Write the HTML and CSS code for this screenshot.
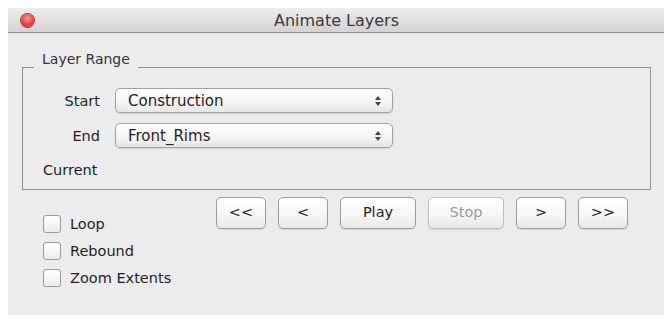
FILE: index.html
```html
<!DOCTYPE html>
<html lang="en">
<head>
    <meta charset="UTF-8">
    <title>Animate Layers</title>
    <link rel="stylesheet" href="styles.css">
</head>
<body>
    <div class="window">
        <div class="titlebar">
            <span class="close"></span>
            <span class="title">Animate Layers</span>
        </div>
        <div class="content">
            <fieldset class="group">
                <legend>Layer Range</legend>
                <div class="range">
                    <label>Start</label>
                    <div class="popup">
                        <span>Construction</span>
                        <svg class="arrows" width="8" height="12" viewBox="0 0 8 12"><path d="M4 1 L7 5 L1 5 Z M4 11 L7 7 L1 7 Z" fill="#444"/></svg>
                    </div>
                    <label>End</label>
                    <div class="popup">
                        <span>Front_Rims</span>
                        <svg class="arrows" width="8" height="12" viewBox="0 0 8 12"><path d="M4 1 L7 5 L1 5 Z M4 11 L7 7 L1 7 Z" fill="#444"/></svg>
                    </div>
                    <label class="left">Current</label>
                    <div></div>
                </div>
            </fieldset>
            <div class="controls">
                <div class="checks">
                    <div class="check"><span class="box"></span>Loop</div>
                    <div class="check"><span class="box"></span>Rebound</div>
                    <div class="check"><span class="box"></span>Zoom Extents</div>
                </div>
                <div class="buttons">
                    <button class="small">&lt;&lt;</button>
                    <button class="small">&lt;</button>
                    <button class="wide">Play</button>
                    <button class="wide" disabled>Stop</button>
                    <button class="small">&gt;</button>
                    <button class="small">&gt;&gt;</button>
                </div>
            </div>
        </div>
    </div>
</body>
</html>
```

FILE: styles.css
```css
body {
    margin: 8px;
    background-color: white;
    font-family: "DejaVu Sans", sans-serif;
    font-size: 15px;
    color: #1e1e1e;
}
.window {
    width: 657px;
    height: 307px;
    background-color: #ececec;
}
.titlebar {
    height: 24px;
    border-bottom: 1px solid #8c8c8c;
    background: linear-gradient(#eeeeee, #d2d2d2);
    display: flex;
    align-items: center;
    position: relative;
}
.close {
    width: 13px;
    height: 13px;
    margin-left: 13px;
    border-radius: 50%;
    background: radial-gradient(circle at 50% 35%, #ff9a9a, #e0403f 60%, #b52a2a);
    box-shadow: 0 0 0 1px #a33;
}
.title {
    position: absolute;
    left: 0;
    right: 0;
    text-align: center;
    font-size: 16px;
    color: #383838;
}
.content {
    padding-top: 18px;
}
.group {
    margin: 0 0 0 14px;
    padding: 0 0 10px 0;
    width: 627px;
    border: 1px solid #8f8f8f;
    box-sizing: content-box;
}
.group legend {
    margin-left: 11px;
    padding: 0 8px 16px 8px;
    line-height: 16px;
    font-size: 14px;
    color: #333;
}
.range {
    display: grid;
    grid-template-columns: 57px 278px;
    column-gap: 15px;
    row-gap: 10px;
    padding-left: 20px;
    padding-top: 5px;
    align-items: center;
}
.range label {
    text-align: right;
    font-size: 14.5px;
}
.range label.left {
    text-align: left;
    margin-top: 3px;
    line-height: 18px;
}
.popup {
    height: 23px;
    border: 1px solid #a2a2a2;
    border-radius: 5px;
    background: linear-gradient(#ffffff, #f4f4f4 60%, #e6e6e6);
    display: flex;
    align-items: center;
    justify-content: space-between;
    padding: 0 10px 0 12px;
    box-shadow: 0 1px 1px rgba(0,0,0,0.12);
}
.controls {
    display: flex;
    margin-top: 7px;
}
.checks {
    width: 173px;
    margin-left: 35px;
    margin-top: 18px;
    display: flex;
    flex-direction: column;
    gap: 9px;
}
.check {
    display: flex;
    align-items: center;
    gap: 9px;
    height: 18px;
    font-size: 14.5px;
}
.box {
    width: 16px;
    height: 16px;
    border: 1px solid #9a9a9a;
    border-radius: 3px;
    background: linear-gradient(#ffffff, #ececec);
}
.buttons {
    display: flex;
    gap: 12px;
}
button {
    height: 32px;
    border: 1px solid #9c9c9c;
    border-radius: 5px;
    background: linear-gradient(#ffffff, #f6f6f6 60%, #e8e8e8);
    font-family: "DejaVu Sans", sans-serif;
    font-size: 14.5px;
    color: #1e1e1e;
    padding: 0 0 3px 0;
    box-shadow: 0 1px 1px rgba(0,0,0,0.1);
}
button.small {
    width: 50px;
}
button.wide {
    width: 76px;
}
button:disabled {
    color: #9a9a9a;
    border-color: #bdbdbd;
}
```
